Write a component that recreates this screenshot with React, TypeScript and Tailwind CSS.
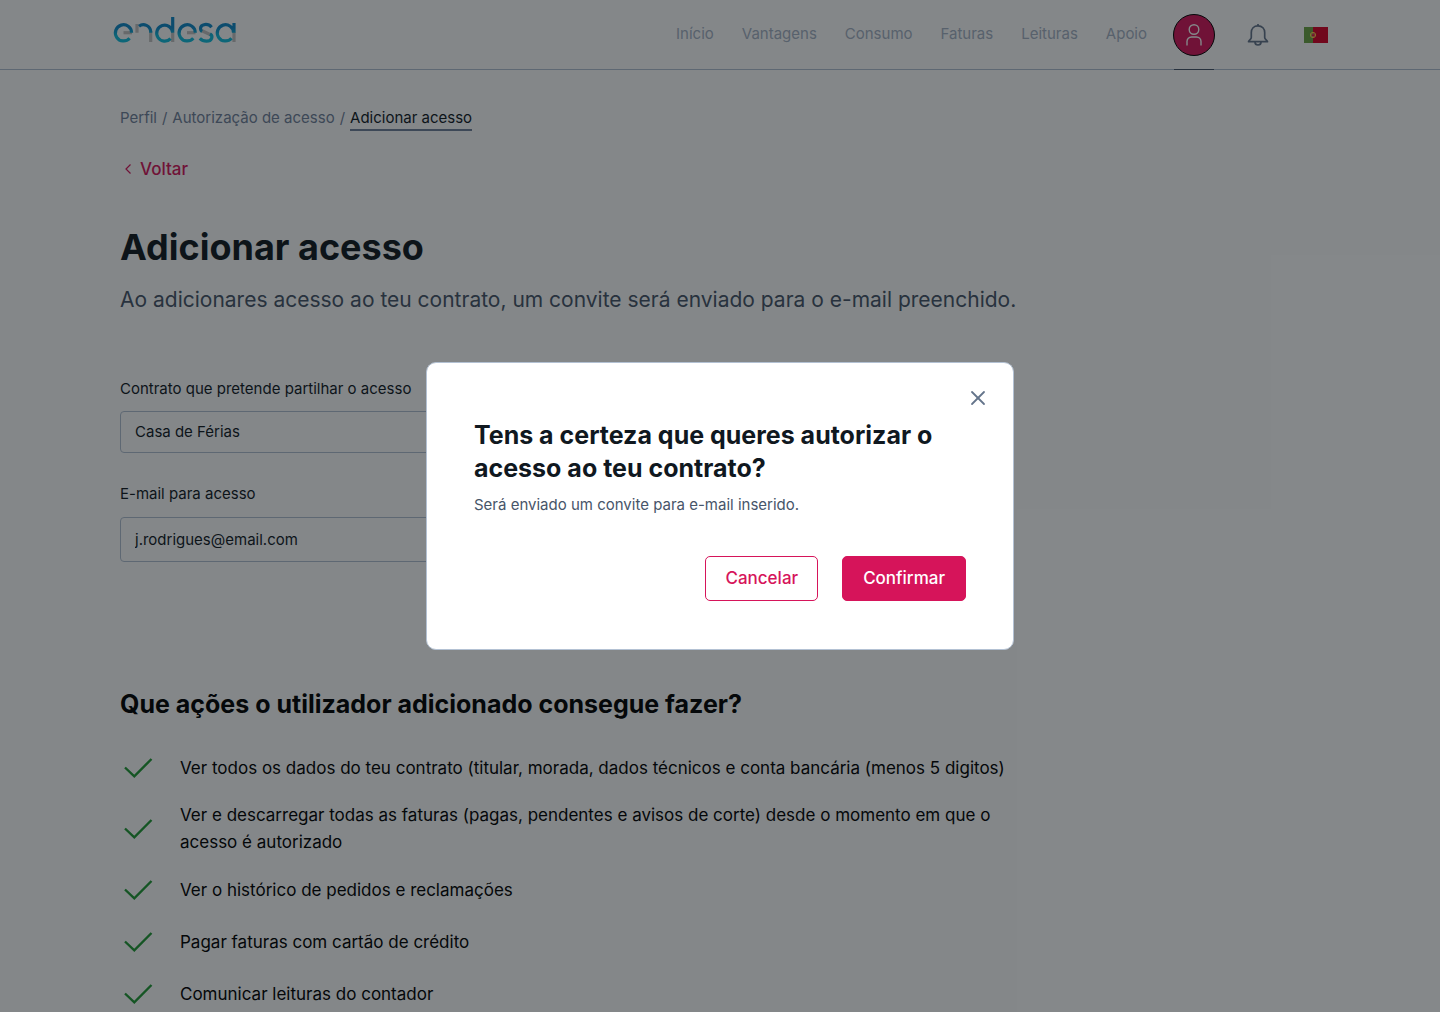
import { useState } from "react";
import { X } from "lucide-react";

const navLinks = ["Início", "Vantagens", "Consumo", "Faturas", "Leituras", "Apoio"];

const actions = [
  "Ver todos os dados do teu contrato (titular, morada, dados técnicos e conta bancária (menos 5 digitos)",
  "Ver e descarregar todas as faturas (pagas, pendentes e avisos de corte) desde o momento em que o acesso é autorizado",
  "Ver o histórico de pedidos e reclamações",
  "Pagar faturas com cartão de crédito",
  "Comunicar leituras do contador",
];

function Logo() {
  return (
    <svg width="126" height="32" viewBox="0 0 126 32" fill="none" strokeWidth="3.2" role="img" aria-label="endesa">
      <defs>
        <linearGradient id="blue" gradientUnits="userSpaceOnUse" x1="0" y1="8" x2="0" y2="28">
          <stop offset="0.3" stopColor="#0f88c8" />
          <stop offset="0.7" stopColor="#10bcdc" />
        </linearGradient>
      </defs>
      <g stroke="#c4c3c2">
        <path d="M11.5 18.7H20" />
        <path d="M25 10V18.7M38.7 17V28" />
        <path d="M60.7 18V28" />
        <path d="M75 18.7H83.5" />
        <path d="M88.5 16L99 21" />
        <path d="M122 18V28" />
      </g>
      <g stroke="url(#blue)">
        <path d="M19.6 18.7A8.1 8.1 0 1 0 17.6 24.2" />
        <path d="M27 12.2A7.3 7.3 0 0 1 38.7 17.5V18.7" />
        <path d="M60.7 3V18.7A8 8 0 1 0 58.6 24.6" />
        <path d="M83.3 18.7A8.1 8.1 0 1 0 81.3 24.2" />
        <path d="M99.6 13.2C96 9 88.5 9.8 88.5 14.8C88.5 16 89 17 90 17.6M98 20C101.5 22 100 27.2 94.5 27.2C91.5 27.2 89.5 26.2 87.8 24.4" />
        <path d="M122 9V18.7M121.5 18.7A8.1 8.1 0 1 0 119.5 24.2" />
      </g>
    </svg>
  );
}

function UserIcon() {
  return (
    <svg width="20" height="24" viewBox="0 0 20 24" fill="none" stroke="#fff" strokeWidth="1.4">
      <circle cx="10" cy="6.5" r="4.8" />
      <path d="M3 22.5V18.5A4.5 4.5 0 0 1 7.5 14H12.5A4.5 4.5 0 0 1 17 18.5V22.5" />
    </svg>
  );
}

function BellIcon() {
  return (
    <svg width="22" height="24" viewBox="0 0 22 24" fill="none" stroke="#64748b" strokeWidth="1.7" strokeLinejoin="round">
      <path d="M11 2.8C6.8 2.8 4.3 5.8 4.3 9.5V14.5C4.3 16.5 1.8 17 1.5 18.7H20.5C20.2 17 17.7 16.5 17.7 14.5V9.5C17.7 5.8 15.2 2.8 11 2.8Z" />
      <path d="M11 2.8V1M8 19A3 3 0 0 0 14 19" />
    </svg>
  );
}

function FlagPT() {
  return (
    <svg width="24" height="16" viewBox="0 0 24 16">
      <rect width="24" height="16" fill="#d80027" />
      <rect width="9" height="16" fill="#6da544" />
      <circle cx="9" cy="8" r="2.6" fill="none" stroke="#ffda44" strokeWidth="1" />
      <path d="M7.8 6.8H10.2V8.5A1.2 1.2 0 0 1 7.8 8.5Z" fill="#d80027" stroke="#f0d0a0" strokeWidth="0.5" />
    </svg>
  );
}

function CheckIcon() {
  return (
    <svg className="shrink-0" width="36" height="36" viewBox="0 0 36 36" fill="none" stroke="#209a34" strokeWidth="2.4">
      <path d="M5 17.5L14.3 26.3L31.5 9" />
    </svg>
  );
}

export default function App() {
  const [open, setOpen] = useState(true);

  return (
    <div className="relative h-screen overflow-hidden bg-white font-['Inter',sans-serif] text-[#10181f]">
      <header className="flex h-[70px] items-center justify-between border-b border-[#b3c1d3] px-28">
        <a href="#" className="pb-[9px]">
          <Logo />
        </a>
        <nav className="flex h-full items-center text-[15px] text-[#a6b2c5]">
          <div className="flex gap-7">
            {navLinks.map((link) => (
              <a key={link} href="#">{link}</a>
            ))}
          </div>
          <a href="#" aria-label="Perfil" className="relative ml-[26px] flex h-[70px] w-[42px] items-center">
            <span className="flex size-[42px] items-center justify-center rounded-full border border-black bg-[#d6145a]">
              <UserIcon />
            </span>
            <span className="absolute inset-x-px bottom-0 h-px bg-[#475569]" />
          </a>
          <button type="button" aria-label="Notificações" className="ml-8">
            <BellIcon />
          </button>
          <button type="button" aria-label="Português" className="ml-[35px]">
            <FlagPT />
          </button>
        </nav>
      </header>

      <main className="px-[120px] pt-[37px]">
        <nav className="flex items-start gap-[5px] text-[15px] leading-[22px] text-[#71819a]">
          <a href="#">Perfil</a>
          <span>/</span>
          <a href="#">Autorização de acesso</a>
          <span>/</span>
          <a href="#" className="border-b-2 border-[#71819a] text-[#10181f]">Adicionar acesso</a>
        </nav>
        <a href="#" className="mt-[26px] flex w-fit items-center text-[17px] leading-6 font-medium text-[#d6145a]">
          <svg className="mr-1" width="16" height="16" viewBox="0 0 16 16" fill="none" stroke="currentColor" strokeWidth="1.2">
            <path d="M10.5 3.5L6 8L10.5 12.5" />
          </svg>
          Voltar
        </a>

        <h1 className="mt-[42px] text-4xl leading-12 font-bold">Adicionar acesso</h1>
        <p className="mt-[13px] text-[21px] leading-8 text-[#475569]">
          Ao adicionares acesso ao teu contrato, um convite será enviado para o e-mail preenchido.
        </p>

        <form className="mt-[61px] flex w-[500px] max-w-full flex-col">
          <label htmlFor="contract" className="text-[15px] leading-6">Contrato que pretende partilhar o acesso</label>
          <select
            id="contract"
            className="mt-2.5 h-[42px] appearance-none rounded border border-[#b3c1d3] px-3.5 text-[15px]"
          >
            <option>Casa de Férias</option>
          </select>
          <label htmlFor="email" className="mt-[29px] text-[15px] leading-6">E-mail para acesso</label>
          <input
            id="email"
            type="email"
            defaultValue="j.rodrigues@email.com"
            className="mt-[11px] h-[45px] rounded border border-[#b3c1d3] px-3.5 text-[15px]"
          />
        </form>

        <h2 className="mt-[124px] text-[25px] leading-9 font-bold text-black">
          Que ações o utilizador adicionado consegue fazer?
        </h2>
        <ul className="mt-7 flex max-w-[900px] flex-col gap-4 text-[17px] leading-[27px] text-black">
          {actions.map((action) => (
            <li key={action} className="flex min-h-9 items-center gap-6">
              <CheckIcon />
              {action}
            </li>
          ))}
        </ul>
      </main>

      {open && (
        <div className="absolute inset-0 flex items-center justify-center bg-[#0a1014]/50">
          <div
            role="dialog"
            aria-modal="true"
            aria-labelledby="dialog-title"
            className="relative w-[588px] rounded-[10px] border border-[#b3c1d3] bg-white px-[47px] pt-14 pb-12"
          >
            <button
              type="button"
              aria-label="Fechar"
              onClick={() => setOpen(false)}
              className="absolute top-[23px] right-[23px] text-[#64748b]"
            >
              <X size={24} strokeWidth={1.8} />
            </button>
            <h3 id="dialog-title" className="text-[25px] leading-[33px] font-bold">
              Tens a certeza que queres autorizar o acesso ao teu contrato?
            </h3>
            <p className="mt-2 text-[15px] leading-6 text-[#475569]">Será enviado um convite para e-mail inserido.</p>
            <div className="mt-[39px] flex justify-end gap-6">
              <button
                type="button"
                onClick={() => setOpen(false)}
                className="h-[45px] rounded-[5px] border border-[#d6145a] px-[19px] text-[17px] font-medium text-[#d6145a]"
              >
                Cancelar
              </button>
              <button
                type="button"
                onClick={() => setOpen(false)}
                className="h-[45px] rounded-[5px] border border-[#d6145a] bg-[#d6145a] px-5 text-[17px] font-medium text-white"
              >
                Confirmar
              </button>
            </div>
          </div>
        </div>
      )}
    </div>
  );
}
